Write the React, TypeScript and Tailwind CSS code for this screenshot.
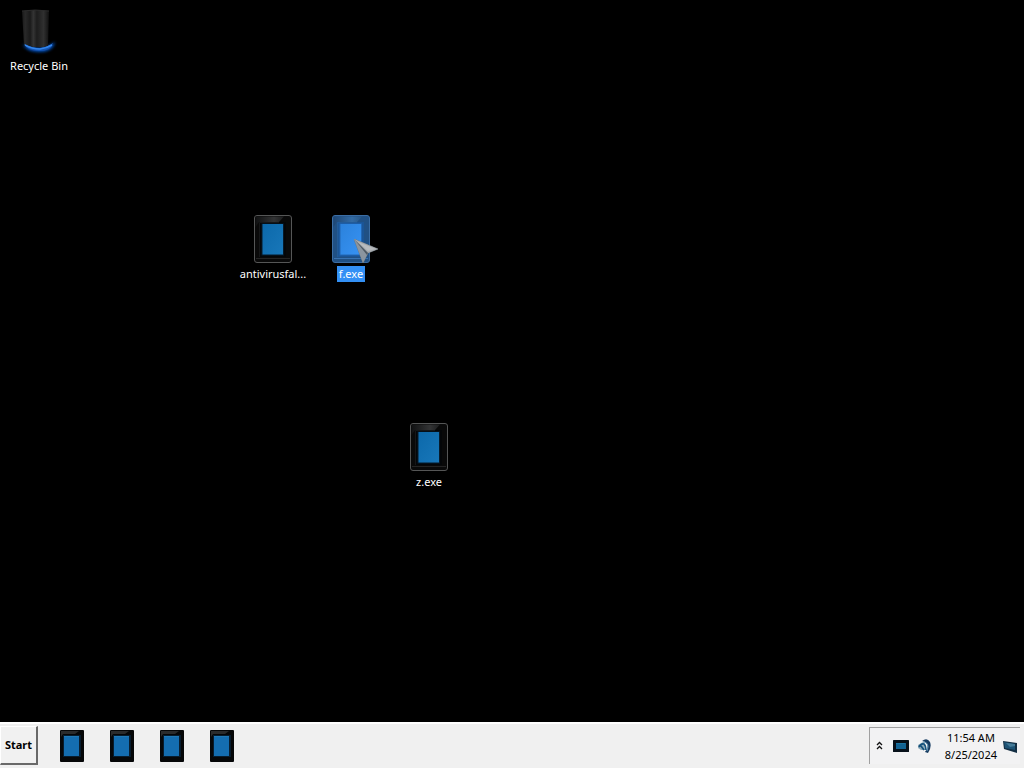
import { useId, useState } from "react";

function TabletIcon({ className, selected = false }: { className: string; selected?: boolean }) {
  const id = useId();
  return (
    <svg viewBox="0 0 38 48" className={className} aria-hidden="true">
      <defs>
        <linearGradient id={id + "g"} x1="0" y1="0" x2="1" y2="0">
          <stop offset="0" stopColor={selected ? "#1e4674" : "#101112"} />
          <stop offset="0.65" stopColor={selected ? "#336ba4" : "#333435"} />
          <stop offset="1" stopColor={selected ? "#285684" : "#1b1c1d"} />
        </linearGradient>
        <linearGradient id={id + "s"} x1="0" y1="0" x2="1" y2="1">
          <stop offset="0" stopColor={selected ? "#2b82dc" : "#0c69ab"} />
          <stop offset="1" stopColor={selected ? "#3792f3" : "#1877b9"} />
        </linearGradient>
      </defs>
      <rect
        x="0.5"
        y="0.5"
        width="37"
        height="47"
        rx="2.5"
        fill={selected ? "#205084" : "#090909"}
        stroke={selected ? "#3b6da4" : "#555656"}
      />
      <path d="M1.5 1.5H30L25 7H5L1.5 12Z" fill={`url(#${id}g)`} />
      <path d="M5 7H32V42H5Z" fill={selected ? "#1b5596" : "#040608"} />
      <path d="M5.5 42V7.5H25" fill="none" stroke={selected ? "#225b98" : "#161718"} />
      <path d="M2 43.5H36" stroke={selected ? "#3872b1" : "#242424"} />
      <rect x="7.5" y="8.5" width="22.5" height="32" fill={selected ? "#2167b5" : "#061a2a"} />
      <rect x="8.5" y="9" width="20.5" height="30.5" fill={`url(#${id}s)`} />
    </svg>
  );
}

function SmallTabletIcon() {
  return (
    <svg viewBox="0 0 24 32" className="h-8 w-6" aria-hidden="true">
      <rect width="24" height="32" rx="1" fill="#060708" />
      <path d="M1 1H19L15 4H3L1 7Z" fill="#2a2b2c" />
      <rect x="3" y="5" width="18" height="22" fill="#071c2e" />
      <rect x="4" y="6" width="15" height="20" fill="#146db0" />
      <path d="M4 6.5H19" stroke="#1f79b5" />
    </svg>
  );
}

function RecycleBinIcon() {
  return (
    <svg viewBox="0 0 48 48" className="h-12 w-12" aria-hidden="true">
      <defs>
        <linearGradient id="bin-body">
          <stop offset="0" stopColor="#181818" />
          <stop offset="0.12" stopColor="#292929" />
          <stop offset="0.3" stopColor="#1a1a1a" />
          <stop offset="0.42" stopColor="#343434" />
          <stop offset="0.55" stopColor="#1d1d1d" />
          <stop offset="0.8" stopColor="#303030" />
          <stop offset="1" stopColor="#101010" />
        </linearGradient>
        <filter id="bin-glow" x="-40%" y="-80%" width="180%" height="260%">
          <feGaussianBlur stdDeviation="1.5" />
        </filter>
      </defs>
      <path d="M8 36Q14 40 24 40Q34 39 40 34Q38 44 24 44Q10 43 8 36Z" fill="#0754c5" filter="url(#bin-glow)" />
      <path d="M7 3Q20 1 34 3L33 38Q24 41 9 37Z" fill="url(#bin-body)" />
      <path d="M7 3Q20 1 34 3" fill="none" stroke="#2c2c2c" />
      <path d="M9 36Q17 40 25 40Q33 39 38 35Q36 43 24 43Q12 42 9 36Z" fill="#1456b5" />
      <path d="M10 37Q17 41 25 41Q32 40 37 37" fill="none" stroke="#3484e8" strokeWidth="1.5" />
    </svg>
  );
}

function Pointer() {
  return (
    <svg viewBox="0 0 26 26" className="pointer-events-none absolute left-[354px] top-[239px] h-[26px] w-[26px]" aria-hidden="true">
      <path d="M0 0L24 10L14 14L9 24Z" fill="#7e868e" stroke="#66717b" strokeWidth="0.7" />
      <path d="M0 0L24 10L14 14Z" fill="#a5a9ac" />
      <path d="M0 0L14 14L9 24Z" fill="#8b959f" />
      <path d="M1 1L14 14L13 16Z" fill="#4f5962" />
      <path d="M4 3L22 10L14 12Z" fill="#b9bcbf" />
    </svg>
  );
}

const files = [
  { name: "antivirusfal...", place: "left-[234px] top-[215px]" },
  { name: "f.exe", place: "left-[312px] top-[215px]" },
  { name: "z.exe", place: "left-[390px] top-[423px]" },
];

export default function App() {
  const [selected, setSelected] = useState("f.exe");
  return (
    <div className="flex min-h-screen flex-col bg-black font-['Noto_Sans','Open_Sans',sans-serif] text-[11px] leading-4 text-white">
      <main className="relative flex-1 overflow-hidden">
        <button type="button" className="absolute left-0 top-2 flex w-[78px] flex-col items-center gap-0.5">
          <RecycleBinIcon />
          <span>Recycle Bin</span>
        </button>
        {files.map((file) => (
          <button
            key={file.name}
            type="button"
            onClick={() => setSelected(file.name)}
            className={`absolute flex w-[78px] flex-col items-center gap-[3px] ${file.place}`}
          >
            <TabletIcon className="h-12 w-[38px]" selected={selected === file.name} />
            <span className={selected === file.name ? "bg-[#3390f5] px-0.5" : "px-0.5"}>{file.name}</span>
          </button>
        ))}
        <Pointer />
      </main>

      <footer className="flex h-[46px] items-stretch justify-between border-t-2 border-white bg-[#f0f0f0] text-black">
        <div className="flex items-start">
          <button
            type="button"
            className="mr-[22px] mt-0.5 h-[39px] w-[38px] border-b-2 border-l border-r-2 border-t border-b-[#696969] border-l-white border-r-[#696969] border-t-white bg-[#f1f1f1] font-bold"
          >
            Start
          </button>
          <nav aria-label="Running programs" className="flex gap-[26px] pt-1.5">
            {["Program 1", "Program 2", "Program 3", "Program 4"].map((label) => (
              <button key={label} type="button" aria-label={label}>
                <SmallTabletIcon />
              </button>
            ))}
          </nav>
        </div>

        <div className="mb-1 mr-1 mt-[3px] flex items-center border-l border-t border-[#a0a0a0] bg-[#f2f2f3]">
          <button type="button" aria-label="Show hidden icons" className="ml-[5px] mr-[9px]">
            <svg viewBox="0 0 9 10" className="h-[10px] w-[9px]" fill="none" stroke="#111" strokeWidth="1.3" aria-hidden="true">
              <path d="M2 4L4.500 1.500L7 4M2 8L4.500 5.500L7 8" />
            </svg>
          </button>
          <button type="button" aria-label="Display" className="mr-2">
            <svg viewBox="0 0 16 12" className="h-3 w-4" aria-hidden="true">
              <rect width="16" height="12" rx="0.5" fill="#07111a" />
              <rect x="3" y="3" width="10" height="6" fill="#126494" />
              <path d="M3 3.5H12" stroke="#1c74a2" />
            </svg>
          </button>
          <button type="button" aria-label="Volume" className="mr-3">
            <svg viewBox="0 0 16 16" className="h-4 w-4" aria-hidden="true">
              <path d="M1 7L6 4L9 7L9 12L4 12L1 10Z" fill="#8eabba" />
              <path d="M5 3Q10 -1 13 4Q15 9 11 15L8 14Q12 9 10 6Q8 3 5 3Z" fill="#173c61" />
              <path d="M2 9Q4 5 7 6Q9 8 9 12M4 8L7 12" fill="none" stroke="#15517c" strokeWidth="1.7" />
              <path d="M6 4Q11 4 11 9L10 13" fill="none" stroke="#6398b7" />
            </svg>
          </button>
          <time dateTime="2024-08-25T11:54" className="mr-1.5 flex flex-col items-center gap-px">
            <span>11:54 AM</span>
            <span>8/25/2024</span>
          </time>
          <button type="button" aria-label="Show desktop" className="mr-0.5">
            <svg viewBox="0 0 15 15" className="h-[15px] w-[15px]" aria-hidden="true">
              <path d="M0 2L14 4V14L1 10Z" fill="#132e43" />
              <path d="M1 3L12 5V11L2 9Z" fill="#1d5375" />
              <path d="M3 4L12 5V7L7 8Z" fill="#457b98" />
            </svg>
          </button>
        </div>
      </footer>
    </div>
  );
}
